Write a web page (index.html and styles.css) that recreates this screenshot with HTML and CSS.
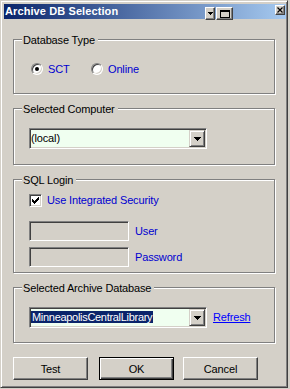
FILE: index.html
```html
<!DOCTYPE html>
<html lang="en">
<head>
  <meta charset="UTF-8">
  <meta name="viewport" content="width=device-width, initial-scale=1">
  <title>Archive DB Selection</title>
  <link rel="stylesheet" href="styles.css">
</head>
<body>

  <div class="window">
    <div class="titlebar">
      <span class="title">Archive DB Selection</span>
      <span class="tb-btn tb-menu">
        <svg width="5" height="3" viewBox="0 0 5 3" shape-rendering="crispEdges"><path d="M0 0h5v1h-5z M1 1h3v1h-3z M2 2h1v1h-1z" fill="#000"/></svg>
      </span>
      <span class="tb-btn tb-restore">
        <svg width="10" height="8" viewBox="0 0 10 8" shape-rendering="crispEdges"><path d="M0 0h10v2h-10z M0 2h1v6h-1z M9 2h1v6h-1z M0 7h10v1h-10z" fill="#000"/></svg>
      </span>
      <span class="tb-btn tb-close">
        <svg width="6" height="6" viewBox="0 0 6 6"><path d="M0.5 0.5 L5.5 5.5 M5.5 0.5 L0.5 5.5" stroke="#000" stroke-width="1.2"/></svg>
      </span>
    </div>

    <div class="content">

      <!-- Database type -->
      <div class="group">
        <div class="legend">Database Type</div>
        <div class="group-body body-type">
          <label class="radio-item first"><span class="radio checked"></span><span class="blue">SCT</span></label>
          <label class="radio-item"><span class="radio"></span><span class="blue">Online</span></label>
        </div>
      </div>

      <!-- Computer -->
      <div class="group">
        <div class="legend">Selected Computer</div>
        <div class="group-body body-computer">
          <div class="combo">
            <span class="combo-text">(local)</span>
            <span class="combo-btn">
              <svg width="7" height="4" viewBox="0 0 7 4" shape-rendering="crispEdges"><path d="M0 0h7v1h-7z M1 1h5v1h-5z M2 2h3v1h-3z M3 3h1v1h-1z" fill="#000"/></svg>
            </span>
          </div>
        </div>
      </div>

      <!-- SQL login -->
      <div class="group">
        <div class="legend">SQL Login</div>
        <div class="group-body body-login">
          <label class="check-row">
            <span class="checkbox">
              <svg width="7" height="7" viewBox="0 0 7 7" shape-rendering="crispEdges"><path d="M0 2h1v3h-1z M1 3h1v3h-1z M2 4h1v3h-1z M3 3h1v3h-1z M4 2h1v3h-1z M5 1h1v3h-1z M6 0h1v3h-1z" fill="#000"/></svg>
            </span>
            <span class="blue">Use Integrated Security</span>
          </label>
          <div class="field-row">
            <span class="textbox"></span>
            <span class="field-label blue">User</span>
          </div>
          <div class="field-row">
            <span class="textbox"></span>
            <span class="field-label blue">Password</span>
          </div>
        </div>
      </div>

      <!-- Archive database -->
      <div class="group">
        <div class="legend">Selected Archive Database</div>
        <div class="group-body body-archive">
          <div class="combo">
            <div class="combo-text"><span class="selected">MinneapolisCentralLibrary</span></div>
            <span class="combo-btn">
              <svg width="7" height="4" viewBox="0 0 7 4" shape-rendering="crispEdges"><path d="M0 0h7v1h-7z M1 1h5v1h-5z M2 2h3v1h-3z M3 3h1v1h-1z" fill="#000"/></svg>
            </span>
          </div>
          <a href="#" class="link">Refresh</a>
        </div>
      </div>

      <div class="buttons">
        <button type="button" class="btn">Test</button>
        <button type="button" class="btn btn-default">OK</button>
        <button type="button" class="btn btn-cancel">Cancel</button>
      </div>

    </div>
  </div>

</body>
</html>
```

FILE: styles.css
```css
/* Basic Reset */
* {
  box-sizing: border-box;
  margin: 0;
  padding: 0;
}

body {
  font-family: "Liberation Sans", Arial, sans-serif;
  font-size: 11px;
  line-height: 13px;
  letter-spacing: -0.15px;
  color: #000;
  background-color: #d4d0c8;
}

/* Window frame */
.window {
  width: 288px;
  height: 388px;
  background-color: #d4d0c8;
  border: 1px solid;
  border-color: #d4d0c8 #404040 #404040 #d4d0c8;
  box-shadow: inset 1px 1px #fff, inset -1px -1px #808080;
  padding: 3px 1px 0 3px;
}

.titlebar {
  display: flex;
  align-items: flex-start;
  height: 15px;
  padding-left: 1px;
  background: linear-gradient(to right, #0a246a, #a6caf0);
  color: #fff;
  font-weight: bold;
  line-height: 15px;
  letter-spacing: 0.1px;
}

.title {
  white-space: nowrap;
}

.tb-btn {
  display: flex;
  align-items: center;
  justify-content: center;
  background-color: #d4d0c8;
  border: 1px solid;
  border-color: #fff #404040 #404040 #fff;
  box-shadow: inset -1px -1px #808080;
}

.tb-menu {
  width: 10px;
  height: 13px;
  margin: 3px 1px 0 auto;
}

.tb-restore {
  width: 17px;
  height: 13px;
  margin: 3px 42px 0 0;
}

.tb-close {
  width: 10px;
  height: 10px;
  margin: 1px 1px 0 0;
}

/* Dialog body */
.content {
  padding: 20px 11px 0 9px;
}

.group {
  border: 1px solid #808080;
  box-shadow: inset 1px 1px #fff, 1px 1px #fff;
  margin-bottom: 14px;
}

.legend {
  width: fit-content;
  margin: -6px 0 -7px 8px;
  padding: 0 3px 0 1px;
  background-color: #d4d0c8;
  line-height: 13px;
}

.blue {
  color: #0000d0;
}

.body-type {
  display: flex;
  align-items: center;
  height: 53px;
  padding: 22px 0 17px 17px;
}

.radio-item {
  display: flex;
  align-items: center;
  height: 14px;
  line-height: 14px;
}

.radio-item.first {
  width: 60px;
}

.radio {
  display: flex;
  align-items: center;
  justify-content: center;
  width: 12px;
  height: 12px;
  margin-right: 5px;
  border-radius: 50%;
  border: 1px solid;
  border-color: #808080 #fff #fff #808080;
  background-color: #fff;
  box-shadow: inset 1px 1px #404040, inset -1px -1px #d4d0c8;
}

.radio.checked::after {
  content: "";
  width: 4px;
  height: 4px;
  border-radius: 50%;
  background-color: #000;
}

/* Combo boxes */
.body-computer {
  padding: 19px 0 15px 15px;
}

.body-archive {
  display: flex;
  align-items: center;
  padding: 19px 0 14px 15px;
}

.combo {
  display: flex;
  align-items: center;
  width: 178px;
  height: 21px;
  padding: 1px;
  border: 1px solid;
  border-color: #808080 #fff #fff #808080;
  background-color: #f0fff0;
  box-shadow: inset 1px 1px #404040, inset -1px -1px #d4d0c8;
}

.combo-text {
  flex: 1;
  white-space: nowrap;
  overflow: hidden;
}

.selected {
  padding: 0 1px;
  letter-spacing: -0.3px;
  background-color: #0a246a;
  color: #fff;
}

.combo-btn {
  display: flex;
  align-items: center;
  justify-content: center;
  width: 16px;
  height: 17px;
  background-color: #d4d0c8;
  border: 1px solid;
  border-color: #d4d0c8 #404040 #404040 #d4d0c8;
  box-shadow: inset 1px 1px #fff, inset -1px -1px #808080;
}

.link {
  margin-left: 6px;
  color: #0000ff;
  text-decoration: underline;
}

/* SQL login */
.body-login {
  padding: 14px 0 5px 15px;
}

.check-row {
  display: flex;
  align-items: center;
  height: 13px;
  margin-bottom: 14px;
}

.checkbox {
  display: flex;
  align-items: center;
  justify-content: center;
  width: 13px;
  height: 13px;
  margin-right: 5px;
  border: 1px solid;
  border-color: #808080 #fff #fff #808080;
  background-color: #fff;
  box-shadow: inset 1px 1px #404040, inset -1px -1px #d4d0c8;
}

.field-row {
  display: flex;
  align-items: center;
}

.field-row + .field-row {
  margin-top: 6px;
}

.textbox {
  width: 100px;
  height: 20px;
  border: 1px solid;
  border-color: #808080 #fff #fff #808080;
  background-color: #d4d0c8;
  box-shadow: inset 1px 1px #404040, inset -1px -1px #d4d0c8;
}

.field-label {
  margin-left: 6px;
}

/* Buttons */
.buttons {
  display: flex;
}

.btn {
  width: 75px;
  height: 23px;
  font-family: inherit;
  font-size: 11px;
  letter-spacing: inherit;
  color: #000;
  background-color: #d4d0c8;
  border: 1px solid;
  border-color: #fff #404040 #404040 #fff;
  box-shadow: inset -1px -1px #808080;
}

.btn-default {
  margin-left: 11px;
  border-color: #000;
  box-shadow: inset 1px 1px #fff, inset -1px -1px #404040, inset -2px -2px #808080;
}

.btn-cancel {
  margin-left: 9px;
}
```
